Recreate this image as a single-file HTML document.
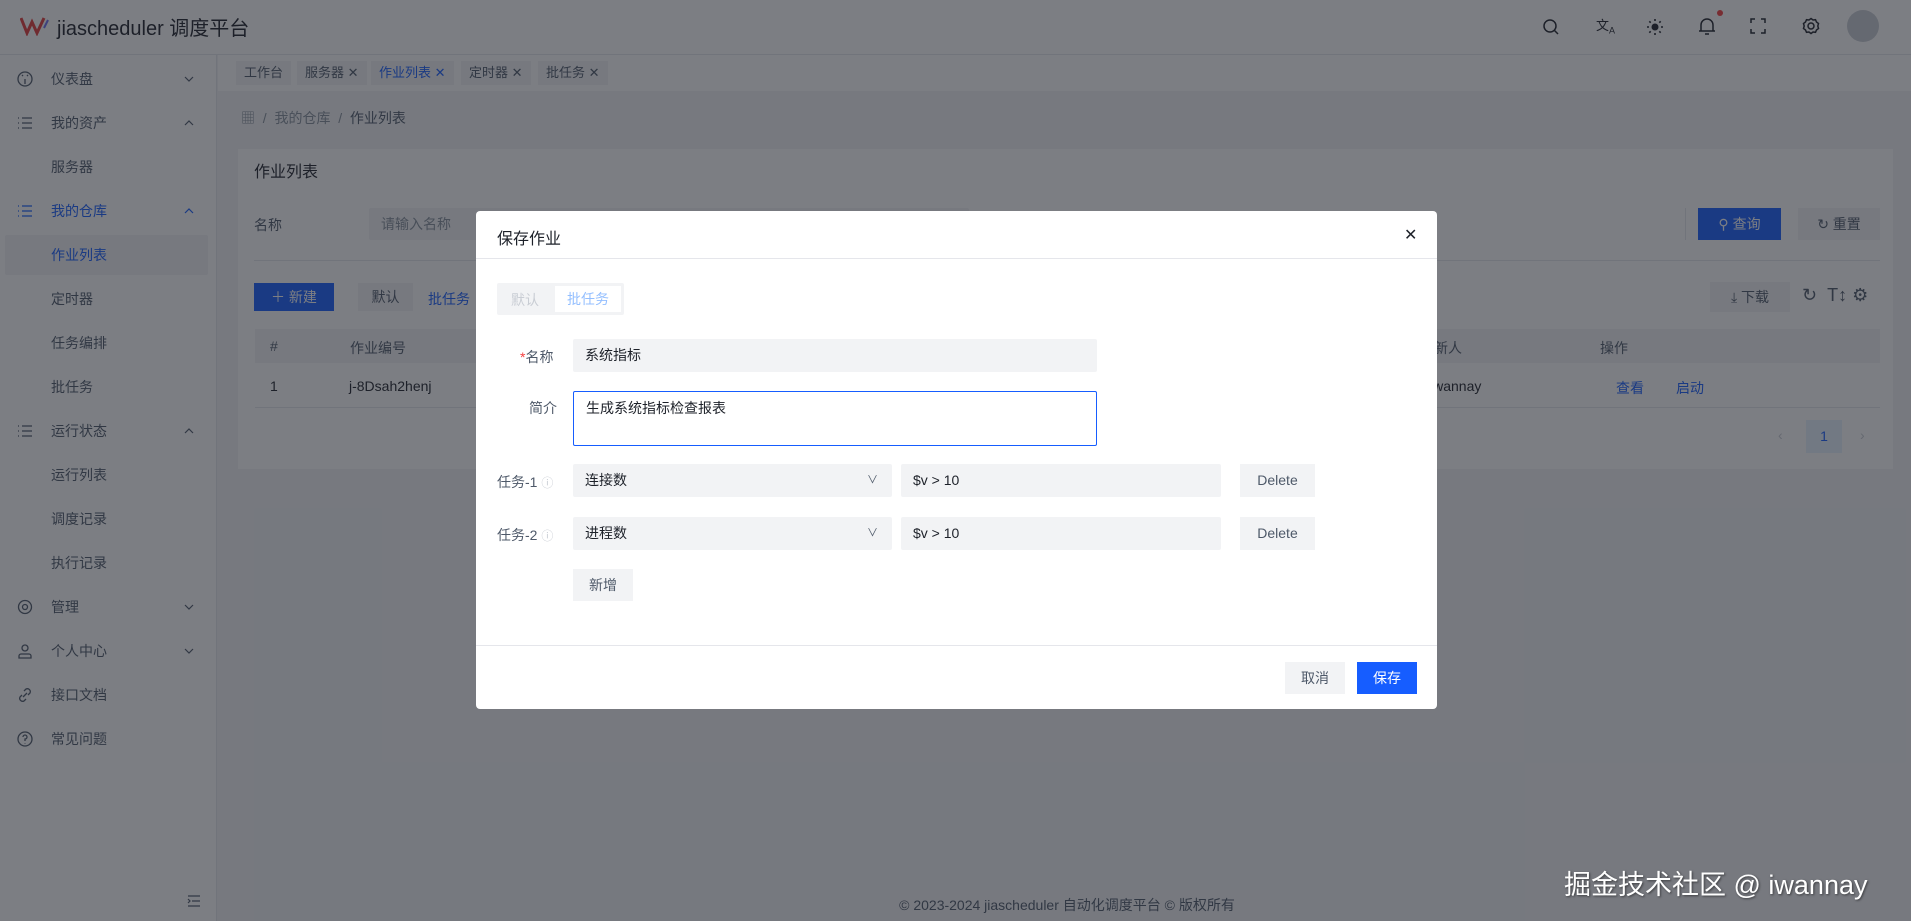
<!DOCTYPE html>
<html><head><meta charset="utf-8"><style>
*{box-sizing:border-box;margin:0;padding:0}
body{width:1911px;height:921px;overflow:hidden;position:relative;background:#f2f3f5;font-family:"Liberation Sans","Noto Sans CJK SC",sans-serif;font-size:14px;color:#1d2129}
.a{position:absolute}
.hdr{left:0;top:0;width:1911px;height:55px;background:#fff;border-bottom:1px solid #e5e6eb}
.side{left:0;top:55px;width:217px;height:866px;background:#fff;border-right:1px solid #e5e6eb}
.mi{position:absolute;left:0;width:217px;height:40px;line-height:40px;font-size:14px;color:#4e5969}
.mi .t{position:absolute;left:51px}
.mi .ic{position:absolute;left:17px;top:12px;width:16px;height:16px}
.mi .ch{position:absolute;left:183px;top:14px;width:12px;height:12px}
.tag{position:absolute;top:61px;height:24px;line-height:24px;background:#f2f3f5;padding:0 8px;font-size:13px;color:#4e5969}
.btn{position:absolute;text-align:center;font-size:14px}
.in{position:absolute;background:#f2f3f5;border-radius:2px;padding-left:12px;font-size:14px;color:#1d2129}
.mask{left:0;top:0;width:1911px;height:921px;background:rgba(29,33,41,0.58)}
.lbl{position:absolute;font-size:14px;color:#4e5969}
</style></head><body>
<!-- header -->
<div class="a hdr"></div>
<svg class="a" style="left:20px;top:16px" width="30" height="20" viewBox="0 0 30 20"><path d="M1 2 L7 17 L12 6 L17 17 L24 2" fill="none" stroke="#e23a3a" stroke-width="3"/><path d="M24 12 L28 4" stroke="#6b6ef0" stroke-width="2"/></svg>
<div class="a" style="left:57px;top:12px;font-size:20px;color:#1d2129">jiascheduler 调度平台</div>
<svg class="a" style="left:1542px;top:18px" width="18" height="18" viewBox="0 0 18 18" fill="none" stroke="#1d2129" stroke-width="1.5"><circle cx="8" cy="8" r="6"/><path d="M12.5 12.5 L16 16"/></svg>
<div class="a" style="left:1596px;top:15px;font-size:13px;color:#1d2129">文<sub style="font-size:9px">A</sub></div>
<svg class="a" style="left:1646px;top:18px" width="18" height="18" viewBox="0 0 18 18"><circle cx="9" cy="9" r="3.5" fill="#1d2129"/><g stroke="#1d2129" stroke-width="1.6"><path d="M9 1v2M9 15v2M1 9h2M15 9h2M3.3 3.3l1.4 1.4M13.3 13.3l1.4 1.4M3.3 14.7l1.4-1.4M13.3 4.7l1.4-1.4"/></g></svg>
<svg class="a" style="left:1698px;top:17px" width="18" height="20" viewBox="0 0 18 20" fill="none" stroke="#1d2129" stroke-width="1.5"><path d="M3 14 V8 a6 6 0 0 1 12 0 V14 Z M1 14 H17 M7 17 H11"/></svg>
<div class="a" style="left:1717px;top:10px;width:6px;height:6px;border-radius:3px;background:#f53f3f"></div>
<svg class="a" style="left:1750px;top:18px" width="16" height="16" viewBox="0 0 16 16" fill="none" stroke="#1d2129" stroke-width="1.5"><path d="M1 5V1h4M11 1h4v4M15 11v4h-4M5 15H1v-4"/></svg>
<svg class="a" style="left:1802px;top:17px" width="18" height="18" viewBox="0 0 18 18" fill="none" stroke="#1d2129" stroke-width="1.5"><circle cx="9" cy="9" r="3"/><path d="M9 1.5l2 1.5 2.5-.3 1 2.3 2 1.5-.7 2.5.7 2.5-2 1.5-1 2.3-2.5-.3-2 1.5-2-1.5-2.5.3-1-2.3-2-1.5.7-2.5-.7-2.5 2-1.5 1-2.3 2.5.3z"/></svg>
<div class="a" style="left:1847px;top:10px;width:32px;height:32px;border-radius:16px;background:#c9cdd4"></div>
<!-- sidebar -->
<div class="a side"></div>
<div class="a" style="left:5px;top:235px;width:203px;height:40px;background:#f2f3f5;border-radius:2px"></div>
<div class="a" style="left:0;top:55px;width:217px">
<div class="mi" style="top:4px"><svg class="ic" viewBox="0 0 16 16" fill="none" stroke="#4e5969" stroke-width="1.3"><circle cx="8" cy="8" r="7"/><path d="M8 8v5M5 4l1 1M11 4l-1 1"/></svg><span class="t">仪表盘</span><svg class="ch" viewBox="0 0 12 12" fill="none" stroke="#4e5969" stroke-width="1.2"><path d="M2 4l4 4 4-4"/></svg></div>
<div class="mi" style="top:48px"><svg class="ic" viewBox="0 0 16 16" fill="none" stroke="#4e5969" stroke-width="1.3"><path d="M1 3h1M5 3h10M1 8h1M5 8h10M1 13h1M5 13h10"/></svg><span class="t">我的资产</span><svg class="ch" viewBox="0 0 12 12" fill="none" stroke="#4e5969" stroke-width="1.2"><path d="M2 8l4-4 4 4"/></svg></div>
<div class="mi" style="top:92px"><span class="t">服务器</span></div>
<div class="mi" style="top:136px;color:#165dff"><svg class="ic" viewBox="0 0 16 16" fill="none" stroke="#165dff" stroke-width="1.3"><path d="M1 3h1M5 3h10M1 8h1M5 8h10M1 13h1M5 13h10"/></svg><span class="t">我的仓库</span><svg class="ch" viewBox="0 0 12 12" fill="none" stroke="#165dff" stroke-width="1.2"><path d="M2 8l4-4 4 4"/></svg></div>
<div class="mi" style="top:180px;color:#165dff"><span class="t">作业列表</span></div>
<div class="mi" style="top:224px"><span class="t">定时器</span></div>
<div class="mi" style="top:268px"><span class="t">任务编排</span></div>
<div class="mi" style="top:312px"><span class="t">批任务</span></div>
<div class="mi" style="top:356px"><svg class="ic" viewBox="0 0 16 16" fill="none" stroke="#4e5969" stroke-width="1.3"><path d="M1 3h1M5 3h10M1 8h1M5 8h10M1 13h1M5 13h10"/></svg><span class="t">运行状态</span><svg class="ch" viewBox="0 0 12 12" fill="none" stroke="#4e5969" stroke-width="1.2"><path d="M2 8l4-4 4 4"/></svg></div>
<div class="mi" style="top:400px"><span class="t">运行列表</span></div>
<div class="mi" style="top:444px"><span class="t">调度记录</span></div>
<div class="mi" style="top:488px"><span class="t">执行记录</span></div>
<div class="mi" style="top:532px"><svg class="ic" viewBox="0 0 16 16" fill="none" stroke="#4e5969" stroke-width="1.3"><circle cx="8" cy="8" r="2.5"/><circle cx="8" cy="8" r="6.5"/></svg><span class="t">管理</span><svg class="ch" viewBox="0 0 12 12" fill="none" stroke="#4e5969" stroke-width="1.2"><path d="M2 4l4 4 4-4"/></svg></div>
<div class="mi" style="top:576px"><svg class="ic" viewBox="0 0 16 16" fill="none" stroke="#4e5969" stroke-width="1.3"><circle cx="8" cy="5" r="3"/><path d="M2 15v-2a2 2 0 0 1 2-2h8a2 2 0 0 1 2 2v2z"/></svg><span class="t">个人中心</span><svg class="ch" viewBox="0 0 12 12" fill="none" stroke="#4e5969" stroke-width="1.2"><path d="M2 4l4 4 4-4"/></svg></div>
<div class="mi" style="top:620px"><svg class="ic" viewBox="0 0 16 16" fill="none" stroke="#4e5969" stroke-width="1.3"><path d="M6 10l4-4M7 4l2-2a3 3 0 0 1 4 4l-2 2M9 12l-2 2a3 3 0 0 1-4-4l2-2"/></svg><span class="t">接口文档</span></div>
<div class="mi" style="top:664px"><svg class="ic" viewBox="0 0 16 16" fill="none" stroke="#4e5969" stroke-width="1.3"><circle cx="8" cy="8" r="7"/><path d="M6 6a2 2 0 1 1 2 2v2M8 12v.5"/></svg><span class="t">常见问题</span></div>
</div>
<svg class="a" style="left:187px;top:895px" width="14" height="12" viewBox="0 0 14 12" fill="none" stroke="#4e5969" stroke-width="1.2"><path d="M1 1h12M5 6h8M1 11h12M1 4l2 2-2 2"/></svg>
<!-- tabs -->
<div class="a" style="left:218px;top:55px;width:1693px;height:36px;background:#fff"></div>
<div class="tag" style="left:236px">工作台</div>
<div class="tag" style="left:297px">服务器 ✕</div>
<div class="tag" style="left:371px;color:#165dff">作业列表 ✕</div>
<div class="tag" style="left:461px">定时器 ✕</div>
<div class="tag" style="left:538px">批任务 ✕</div>
<div class="a" style="left:241px;top:108px;color:#86909c;font-size:14px">▦ &nbsp;/&nbsp; 我的仓库 &nbsp;/&nbsp; <span style="color:#4e5969">作业列表</span></div>
<!-- card -->
<div class="a" style="left:238px;top:149px;width:1655px;height:320px;background:#fff"></div>
<div class="a" style="left:254px;top:158px;font-size:16px">作业列表</div>
<div class="a" style="left:254px;top:215px;color:#4e5969">名称</div>
<div class="in" style="left:369px;top:208px;width:600px;height:32px;line-height:32px;color:#86909c">请输入名称</div>
<div class="a" style="left:1685px;top:208px;width:1px;height:32px;background:#e5e6eb"></div>
<div class="btn" style="left:1698px;top:208px;width:83px;height:32px;line-height:32px;background:#165dff;color:#fff">⚲ 查询</div>
<div class="btn" style="left:1798px;top:208px;width:82px;height:32px;line-height:32px;background:#f2f3f5;color:#4e5969">↻ 重置</div>
<div class="a" style="left:254px;top:260px;width:1626px;height:1px;background:#e5e6eb"></div>
<div class="btn" style="left:254px;top:283px;width:80px;height:28px;line-height:28px;background:#165dff;color:#fff">＋ 新建</div>
<div class="btn" style="left:358px;top:283px;width:55px;height:28px;line-height:28px;background:#f2f3f5;color:#4e5969">默认</div>
<div class="a" style="left:428px;top:289px;color:#165dff">批任务</div>
<div class="btn" style="left:1710px;top:282px;width:80px;height:30px;line-height:30px;background:#f2f3f5;color:#4e5969">⤓ 下载</div>
<div class="a" style="left:1802px;top:285px;font-size:18px;color:#4e5969">↻ &nbsp;T↕ ⚙</div>
<div class="a" style="left:255px;top:329px;width:1625px;height:34px;background:#f2f3f5"></div>
<div class="a" style="left:270px;top:338px;color:#4e5969">#</div>
<div class="a" style="left:350px;top:338px;color:#4e5969">作业编号</div>
<div class="a" style="left:1420px;top:338px;color:#4e5969">更新人</div>
<div class="a" style="left:1600px;top:338px;color:#4e5969">操作</div>
<div class="a" style="left:270px;top:378px">1</div>
<div class="a" style="left:349px;top:378px">j-8Dsah2henj</div>
<div class="a" style="left:1430px;top:378px">iwannay</div>
<div class="a" style="left:1616px;top:378px;color:#165dff">查看</div>
<div class="a" style="left:1676px;top:378px;color:#165dff">启动</div>
<div class="a" style="left:255px;top:407px;width:1625px;height:1px;background:#e5e6eb"></div>
<div class="a" style="left:1778px;top:427px;color:#c9cdd4">‹</div>
<div class="btn" style="left:1806px;top:420px;width:36px;height:33px;line-height:33px;background:#e8f3ff;color:#165dff">1</div>
<div class="a" style="left:1860px;top:427px;color:#c9cdd4">›</div>
<div class="a" style="left:0;top:895px;width:2134px;text-align:center;color:#4e5969;font-size:14px">© 2023-2024 jiascheduler 自动化调度平台 © 版权所有</div>
<!-- mask -->
<div class="a mask"></div>
<!-- modal -->
<div class="a" style="left:476px;top:211px;width:961px;height:498px;background:#fff;border-radius:4px"></div>
<div class="a" style="left:497px;top:225px;font-size:16px">保存作业</div>
<div class="a" style="left:1404px;top:225px;font-size:16px">✕</div>
<div class="a" style="left:476px;top:258px;width:961px;height:1px;background:#e5e6eb"></div>
<div class="a" style="left:497px;top:283px;width:127px;height:32px;background:#f2f3f5;border-radius:2px"></div>
<div class="a" style="left:511px;top:290px;color:#c9cdd4">默认</div>
<div class="a" style="left:555px;top:286px;width:66px;height:26px;background:#fff;color:#94bfff;text-align:center;line-height:26px">批任务</div>
<div class="lbl" style="left:520px;top:347px"><span style="color:#f53f3f">*</span>名称</div>
<div class="in" style="left:573px;top:339px;width:524px;height:33px;line-height:33px">系统指标</div>
<div class="lbl" style="left:529px;top:398px">简介</div>
<div class="in" style="left:573px;top:391px;width:524px;height:55px;background:#fff;border:1px solid #165dff;padding-top:6px;line-height:20px">生成系统指标检查报表</div>
<div class="lbl" style="left:497px;top:472px">任务-1 <span style="color:#c9cdd4;font-size:12px">ⓘ</span></div>
<div class="in" style="left:573px;top:464px;width:319px;height:33px;line-height:33px">连接数<span style="position:absolute;right:14px;color:#4e5969;font-size:11px">∨</span></div>
<div class="in" style="left:901px;top:464px;width:320px;height:33px;line-height:33px">$v &gt; 10</div>
<div class="btn" style="left:1240px;top:464px;width:75px;height:33px;line-height:33px;background:#f2f3f5;color:#4e5969">Delete</div>
<div class="lbl" style="left:497px;top:525px">任务-2 <span style="color:#c9cdd4;font-size:12px">ⓘ</span></div>
<div class="in" style="left:573px;top:517px;width:319px;height:33px;line-height:33px">进程数<span style="position:absolute;right:14px;color:#4e5969;font-size:11px">∨</span></div>
<div class="in" style="left:901px;top:517px;width:320px;height:33px;line-height:33px">$v &gt; 10</div>
<div class="btn" style="left:1240px;top:517px;width:75px;height:33px;line-height:33px;background:#f2f3f5;color:#4e5969">Delete</div>
<div class="btn" style="left:573px;top:569px;width:60px;height:32px;line-height:32px;background:#f2f3f5;color:#4e5969">新增</div>
<div class="a" style="left:476px;top:645px;width:961px;height:1px;background:#e5e6eb"></div>
<div class="btn" style="left:1285px;top:662px;width:60px;height:32px;line-height:32px;background:#f2f3f5;color:#4e5969">取消</div>
<div class="btn" style="left:1357px;top:662px;width:60px;height:32px;line-height:32px;background:#165dff;color:#fff">保存</div>
<!-- watermark -->
<div class="a" style="left:1564px;top:863px;font-size:27px;color:#fff;text-shadow:1px 1px 2px rgba(0,0,0,0.5)">掘金技术社区 @ iwannay</div>
</body></html>
